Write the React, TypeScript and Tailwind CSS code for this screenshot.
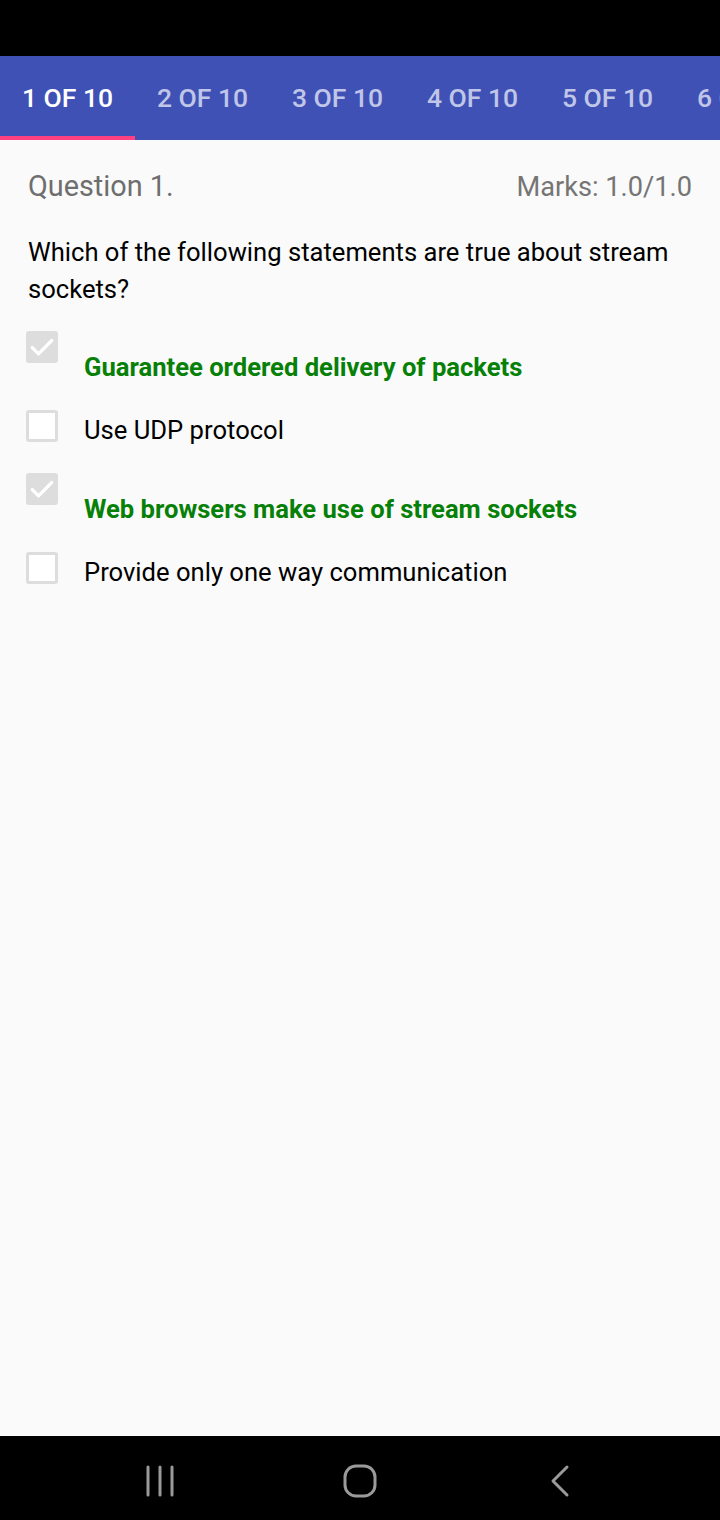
import React from 'react';

const tabs = ['1 OF 10', '2 OF 10', '3 OF 10', '4 OF 10', '5 OF 10', '6 OF 10'];

const options = [
  { text: 'Guarantee ordered delivery of packets', correct: true },
  { text: 'Use UDP protocol', correct: false },
  { text: 'Web browsers make use of stream sockets', correct: true },
  { text: 'Provide only one way communication', correct: false },
];

const CheckBox: React.FC<{ checked: boolean }> = ({ checked }) =>
  checked ? (
    <div className="w-8 h-8 shrink-0 rounded-[3px] bg-[#dddddd] flex items-center justify-center">
      <svg width="26" height="26" viewBox="0 0 24 24" fill="none">
        <path d="M3 12.5l5.8 5.8L21 6" stroke="#ffffff" strokeWidth="3" strokeLinecap="round" strokeLinejoin="round" />
      </svg>
    </div>
  ) : (
    <div className="w-8 h-8 shrink-0 rounded-[3px] border-[3px] border-[#dddddd] bg-white" />
  );

export default function App() {
  return (
    <div className="w-[720px] h-[1520px] flex flex-col bg-[#fafafa] font-['Roboto',sans-serif] overflow-hidden">
      <div className="h-[56px] bg-black shrink-0" />

      <div className="h-[84px] bg-[#3f51b5] flex shrink-0 overflow-hidden">
        {tabs.map((t, i) => (
          <div key={t} className="relative w-[135px] shrink-0 flex items-center justify-center">
            <span className={`text-[26.5px] font-medium whitespace-nowrap ${i === 0 ? 'text-white' : 'text-[#c0c6e8]'}`}>{t}</span>
            {i === 0 && <div className="absolute left-0 right-0 bottom-0 h-[4px] bg-[#ff4081]" />}
          </div>
        ))}
      </div>

      <div className="flex-1 px-[28px] pt-[29px]">
        <div className="flex justify-between items-center h-[36px]">
          <span className="text-[28.8px] text-[#6e6e6e]">Question 1.</span>
          <span className="text-[27.2px] text-[#757575]">Marks: 1.0/1.0</span>
        </div>

        <p className="mt-[29px] text-[25.6px] leading-[37px] text-black">
          Which of the following statements are true about stream sockets?
        </p>

        <div className="mt-[23px] -ml-[2px] flex flex-col gap-[27px]">
          {options.map((o) => (
            <div key={o.text} className="flex items-start gap-[26px]">
              <CheckBox checked={o.correct} />
              {o.correct ? (
                <span className="mt-[20px] text-[25.6px] leading-[32px] font-bold text-[#078007]">{o.text}</span>
              ) : (
                <span className="mt-[4px] text-[25.6px] leading-[32px] text-black">{o.text}</span>
              )}
            </div>
          ))}
        </div>
      </div>

      <div className="h-[84px] bg-black shrink-0 flex items-center justify-around px-[60px] pt-[6px]">
        <svg width="40" height="40" viewBox="0 0 40 40">
          <path d="M8 6v28M20 6v28M32 6v28" stroke="#9a9a9a" strokeWidth="3" strokeLinecap="round" />
        </svg>
        <svg width="40" height="40" viewBox="0 0 40 40">
          <rect x="5" y="5" width="30" height="30" rx="11" fill="none" stroke="#9a9a9a" strokeWidth="3" />
        </svg>
        <svg width="40" height="40" viewBox="0 0 40 40">
          <path d="M27 6L13 20l14 14" fill="none" stroke="#9a9a9a" strokeWidth="3" strokeLinecap="round" strokeLinejoin="round" />
        </svg>
      </div>
    </div>
  );
}
